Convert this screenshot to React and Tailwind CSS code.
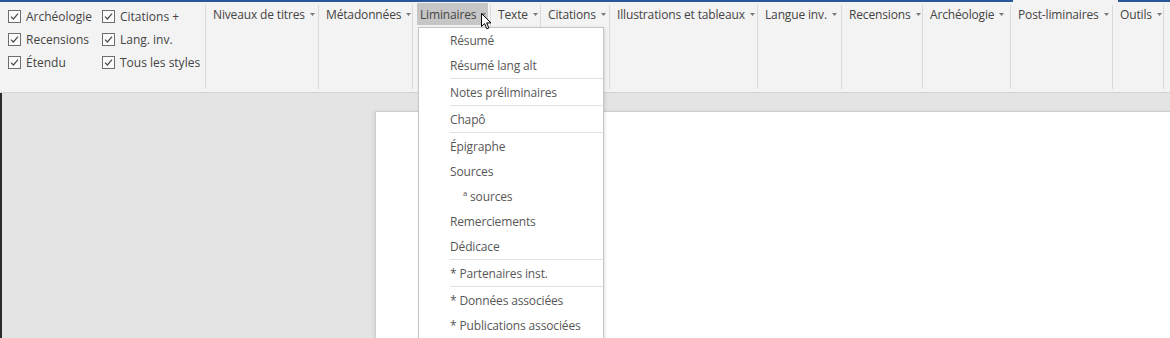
import { Fragment } from 'react'

const checks = [
  ['Archéologie', 'Citations +'],
  ['Recensions', 'Lang. inv.'],
  ['Étendu', 'Tous les styles'],
]

const groups = [
  { label: 'Niveaux de titres', w: 'w-[112px]' },
  { label: 'Métadonnées', w: 'w-[93px]' },
  { label: 'Liminaires', w: 'w-[77px]', active: true },
  { label: 'Texte', w: 'w-[49px]' },
  { label: 'Citations', w: 'w-[68px]' },
  { label: 'Illustrations et tableaux', w: 'w-[147px]' },
  { label: 'Langue inv.', w: 'w-[83px]' },
  { label: 'Recensions', w: 'w-[80px]' },
  { label: 'Archéologie', w: 'w-[87px]' },
  { label: 'Post-liminaires', w: 'w-[101px]' },
  { label: 'Outils', w: 'w-[50px]' },
]

// null = separator line
const menu = [
  'Résumé',
  'Résumé lang alt',
  null,
  'Notes préliminaires',
  null,
  'Chapô',
  null,
  'Épigraphe',
  'Sources',
  { label: 'ª sources', indent: true },
  'Remerciements',
  'Dédicace',
  null,
  '* Partenaires inst.',
  null,
  '* Données associées',
  '* Publications associées',
]

function Separator() {
  return <div className="w-px my-[3px] bg-[#dadada] shrink-0" />
}

function Caret() {
  return (
    <svg width="5" height="3" viewBox="0 0 5 3" className="ml-[5px] mt-px shrink-0">
      <polygon points="0,0 5,0 2.5,3" fill="#7a7a7a" />
    </svg>
  )
}

function Checkbox({ label }) {
  return (
    <div className="flex items-center h-[23px] whitespace-nowrap">
      <div className="w-[13px] h-[13px] border border-[#6e6e6e] bg-[#fbfbfb] flex items-center justify-center shrink-0">
        <svg width="11" height="11" viewBox="0 0 11 11">
          <path d="M2 5.6 L4.4 8 L9 2.6" fill="none" stroke="#4a4a4a" strokeWidth="1.2" />
        </svg>
      </div>
      <span className="ml-[5px]">{label}</span>
    </div>
  )
}

function RibbonButton({ label, active }) {
  return (
    <div
      className={
        'inline-flex items-center h-[22px] pl-[3px] pr-[2px] tracking-[-0.15px] ' +
        (active ? 'bg-[#c6c6c6]' : '')
      }
    >
      <span className="whitespace-nowrap pt-px">{label}</span>
      <Caret />
    </div>
  )
}

function Cursor() {
  return (
    <svg
      width="12"
      height="18"
      viewBox="0 0 12 18"
      className="absolute left-[481px] top-[13px]"
    >
      <path
        d="M0.5 0.5 L0.5 13.5 L3.6 10.6 L5.8 15.8 L7.8 15 L5.7 9.9 L10 9.9 Z"
        fill="#fff"
        stroke="#000"
        strokeWidth="1"
        strokeLinejoin="round"
      />
    </svg>
  )
}

export default function App() {
  return (
    <div className="relative w-[1170px] h-[338px] overflow-hidden bg-[#e4e4e4] text-[12px] text-[#444] font-['Open_Sans',sans-serif] flex flex-col">
      {/* top tab strip */}
      <div className="flex h-[2px] shrink-0">
        <div className="w-[1013px] bg-[#2b579a]" />
        <div className="w-[105px] bg-[#f3f3f3]" />
        <div className="flex-1 bg-[#2b579a]" />
      </div>

      {/* ribbon */}
      <div className="flex h-[91px] shrink-0 bg-[#f3f3f3] border-b border-[#d4d4d4]">
        <div className="w-[205px] shrink-0 pl-[8px] pt-[3px] grid grid-cols-[94px_auto] content-start">
          {checks.map(([a, b]) => (
            <Fragment key={a}>
              <Checkbox label={a} />
              <Checkbox label={b} />
            </Fragment>
          ))}
        </div>
        <Separator />
        {groups.map((g) => (
          <Fragment key={g.label}>
            <div className={g.w + ' shrink-0 pl-[4px] pt-[1px]'}>
              <RibbonButton label={g.label} active={g.active} />
            </div>
            <Separator />
          </Fragment>
        ))}
      </div>

      {/* workspace */}
      <div className="flex flex-1">
        <div className="w-[2px] bg-[#2a2a2a] shrink-0" />
        <div className="flex-1 pl-[373px] pt-[18px] flex">
          <div className="flex-1 bg-white border-l border-t border-[#cdcdcd] shadow-[-2px_0_4px_rgba(0,0,0,0.05)]" />
        </div>
      </div>

      {/* tiny caret in document */}
      <div className="absolute left-[603px] top-[219px] w-px h-[6px] bg-[#8a8a8a]" />

      {/* dropdown menu */}
      <div className="absolute left-[418px] top-[27px] w-[186px] h-[330px] bg-white border border-[#c6c6c6] shadow-[1px_1px_3px_rgba(0,0,0,0.12)] text-[#575757] tracking-[-0.15px]">
        {menu.map((item, i) =>
          item === null ? (
            <div key={i} className="h-[2px] ml-[31px]">
              <div className="h-px bg-[#e1e1e1]" />
            </div>
          ) : (
            <div
              key={i}
              className={
                'h-[25px] flex items-center whitespace-nowrap ' +
                (item.indent ? 'pl-[44px]' : 'pl-[31px]')
              }
            >
              {item.label || item}
            </div>
          )
        )}
      </div>

      <Cursor />
    </div>
  )
}
